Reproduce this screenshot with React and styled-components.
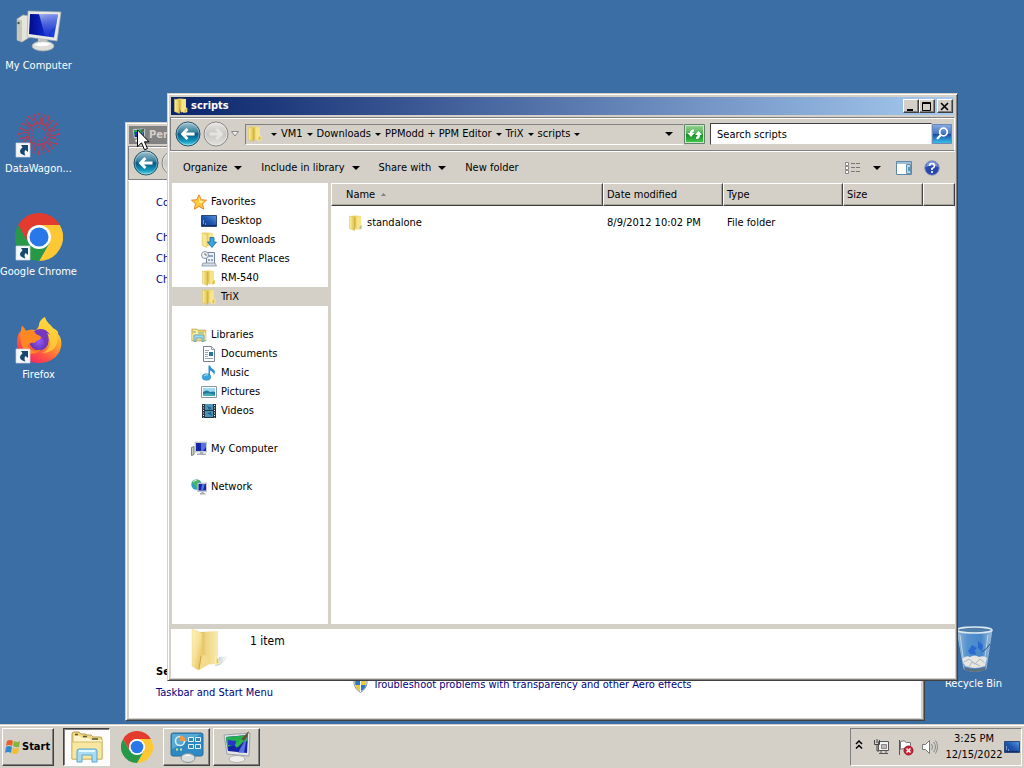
import React from 'react';
import styled, { createGlobalStyle, css } from 'styled-components';

const GlobalStyle = createGlobalStyle`
  * {
    box-sizing: border-box;
  }
  body {
    margin: 0;
    background: #3a6ea5;
    color: #000;
    font-family: "DejaVu Sans Condensed", "Noto Sans", sans-serif;
    font-size: 11px;
    line-height: 14px;
    cursor: default;
  }
  button, input {
    font: inherit;
    color: inherit;
  }
  a {
    color: inherit;
    text-decoration: none;
  }
  svg {
    display: block;
    flex: none;
  }
`

const raised = css`
  border: 1px solid;
  border-color: #fff #404040 #404040 #fff;
  box-shadow: inset -1px -1px 0 #808080;
`

const Screen = styled.div`
  display: flex;
  flex-direction: column;
  height: 100vh;
  overflow: hidden;
`

const Desktop = styled.main`
  position: relative;
  flex: 1;
  min-height: 0;
  display: flex;
  justify-content: space-between;
  padding: 7px 12px 33px 0;
`

const IconColumn = styled.div`
  display: flex;
  flex-direction: column;
  gap: 37px;
  justify-content: ${props => props.end ? 'flex-end' : 'flex-start'};
`

const Shortcut = styled.a`
  display: flex;
  flex-direction: column;
  align-items: center;
  gap: 4px;
  width: 77px;
  color: #fff;
  white-space: nowrap;
`

/* windows */

const Win = styled.section`
  position: absolute;
  display: flex;
  flex-direction: column;
  padding: 2px;
  background: #d4d0c8;
  border: 1px solid;
  border-color: #d4d0c8 #404040 #404040 #d4d0c8;
  box-shadow: inset 1px 1px 0 #fff, inset -1px -1px 0 #808080;
`

const BackWin = styled(Win)`
  left: 125px;
  top: 122px;
  right: 99px;
  bottom: 3px;
`

const FrontWin = styled(Win)`
  left: 167px;
  top: 93px;
  right: 66px;
  bottom: 43px;
`

const TitleBar = styled.header`
  display: flex;
  align-items: center;
  gap: 2px;
  flex: none;
  height: 18px;
  margin: 1px 1px 2px;
  padding: 0 1px 0 2px;
  color: ${props => props.active ? '#fff' : '#d4d0c8'};
  background: ${props => props.active
    ? 'linear-gradient(90deg, #0a246a, #a6caf0)'
    : 'linear-gradient(90deg, #808080, #c0c0c0)'};
`

const Title = styled.h1`
  flex: 1;
  margin: 0;
  font-size: 11px;
  font-weight: bold;
`

const CaptionButton = styled.button`
  ${raised}
  display: flex;
  align-items: center;
  justify-content: center;
  width: 16px;
  height: 14px;
  padding: 0;
  background: #d4d0c8;
`

const CaptionGroup = styled.div`
  display: flex;
`

const NavBar = styled.nav`
  display: flex;
  align-items: center;
  flex: none;
  height: 34px;
  padding: 0 2px 0 4px;
  border: 1px solid;
  border-color: #808080 #fff #808080 #808080;
  box-shadow: 0 1px 0 #fff, inset 0 1px 0 #fff;
`

const IconButton = styled.button`
  display: flex;
  align-items: center;
  justify-content: center;
  padding: 0;
  border: 0;
  background: none;
`

const Travel = styled.div`
  display: flex;
  align-items: center;
  gap: 2px;
  margin-right: 6px;
`

const AddressBar = styled.div`
  display: flex;
  align-items: center;
  flex: 1;
  height: 21px;
  padding: 0 10px 0 1px;
  border: 1px solid;
  border-color: #808080 #d4d0c8 #fff #808080;
`

const Crumbs = styled.div`
  display: flex;
  align-items: center;
  gap: 4px;
  flex: 1;
  padding-left: 8px;
`

const Crumb = styled.a`
  white-space: nowrap;
`

const SearchBox = styled.input`
  width: 222px;
  height: 22px;
  margin: 0 0 0 5px;
  padding: 0 6px;
  border: 1px solid;
  border-color: #404040 #d4d0c8 #d4d0c8 #404040;
  border-radius: 0;
  background: #fff;
  outline: none;
  &::placeholder {
    color: #000;
    opacity: 1;
  }
`

const CommandBar = styled.div`
  display: flex;
  align-items: center;
  flex: none;
  gap: 19px;
  height: 31px;
  margin-top: 1px;
  padding: 0 15px 0 13px;
`

const Command = styled.button`
  display: flex;
  align-items: center;
  gap: 7px;
  padding: 0;
  border: 0;
  background: none;
  white-space: nowrap;
`

const ViewTools = styled.div`
  display: flex;
  align-items: center;
  gap: 12px;
  margin-left: auto;
`

const MoreViews = styled(IconButton)`
  padding-right: 3px;
`

const Panes = styled.div`
  display: flex;
  flex: 1;
  min-height: 0;
  gap: 3px;
  padding-left: 2px;
`

const Tree = styled.aside`
  display: flex;
  flex-direction: column;
  gap: 19px;
  width: 156px;
  padding-top: 9px;
  background: #fff;
`

const TreeRow = styled.a`
  display: flex;
  align-items: center;
  gap: 4px;
  height: 19px;
  padding-left: ${props => props.child ? '29px' : '19px'};
  background: ${props => props.selected ? '#d4d0c8' : 'transparent'};
`

const ListPane = styled.div`
  flex: 1;
  background: #fff;
`

const FileTable = styled.table`
  width: 100%;
  table-layout: fixed;
  border-collapse: separate;
  border-spacing: 0;
`

const HeadCell = styled.th`
  width: ${props => props.w || 'auto'};
  height: 23px;
  padding: 0 3px;
  padding-left: ${props => props.first ? '14px' : '3px'};
  text-align: left;
  font-weight: normal;
  background: #d4d0c8;
  border: 1px solid;
  border-color: #fff #404040 #404040 #fff;
  box-shadow: inset -1px -1px 0 #aaa69e;
`

const Cell = styled.td`
  height: 19px;
  padding: 9px 4px 0;
  padding-left: ${props => props.first ? '17px' : '4px'};
`

const Inline = styled.span`
  display: flex;
  align-items: center;
  gap: ${props => props.gap || '3px'};
`

const Details = styled.footer`
  display: flex;
  align-items: flex-start;
  gap: 20px;
  flex: none;
  height: 49px;
  margin: 5px 0 0 1px;
  padding: 0 20px;
  background: #fff;
  font-size: 12px;
`

const DetailText = styled.span`
  padding-top: 5px;
`

const PanelBody = styled.div`
  display: flex;
  flex: 1;
  min-height: 0;
  gap: 73px;
  margin: 1px 1px 0;
  padding: 15px 27px 18px;
  background: #fff;
  color: #00007f;
`

const TaskPane = styled.div`
  display: flex;
  flex-direction: column;
  gap: 7px;
  width: 124px;
  white-space: nowrap;
`

const TaskHome = styled.a`
  margin-bottom: 14px;
`

const SeeAlso = styled.strong`
  margin-top: auto;
  color: #000;
`

const PanelFoot = styled.a`
  display: flex;
  align-items: center;
  align-self: flex-end;
  gap: 5px;
  height: 30px;
  white-space: nowrap;
`

const Cursor = styled.svg`
  position: absolute;
  left: 137px;
  top: 129px;
`

/* taskbar */

const Taskbar = styled.footer`
  display: flex;
  align-items: center;
  flex: none;
  height: 44px;
  padding: 1px 2px 0;
  gap: 3px;
  background: #d4d0c8;
  border-top: 1px solid #d4d0c8;
  box-shadow: inset 0 1px 0 #fff;
`

const StartButton = styled.button`
  ${raised}
  display: flex;
  align-items: center;
  gap: 1px;
  width: 52px;
  height: 38px;
  margin-right: 6px;
  padding: 0 0 0 1px;
  background: #d4d0c8;
  font-weight: bold;
`

const TaskButton = styled.button`
  display: flex;
  align-items: center;
  justify-content: center;
  width: 47px;
  height: 38px;
  padding: 0;
  background: #d4d0c8;
  border: 1px solid transparent;
  ${props => props.open && raised}
  ${props => props.pressed && css`
    background: #fdfcfb;
    border-color: #404040 #fff #fff #404040;
    box-shadow: inset 1px 1px 0 #808080;
  `}
`

const Tray = styled.div`
  display: flex;
  align-items: center;
  gap: 7px;
  height: 38px;
  margin-left: auto;
  padding: 0 1px 0 4px;
  border: 1px solid;
  border-color: #808080 #fff #fff #808080;
`

const MoreIcons = styled(IconButton)`
  justify-content: flex-start;
  width: 11px;
  padding-bottom: 4px;
`

const Clock = styled.time`
  width: 58px;
  text-align: center;
  line-height: 16px;
  white-space: nowrap;
`

const ShowDesktop = styled(IconButton)`
  margin-left: -6px;
`

/* icons */

const Down = ({ size = 5 }) => (
  <svg width={size === 5 ? 6 : 8} height={size === 5 ? 3 : 4} viewBox="0 0 8 4">
    <path d="M0 0h8L4 4z" fill="#000" />
  </svg>
)

const Folder = () => (
  <svg width="16" height="16" viewBox="0 0 16 16">
    <defs>
      <linearGradient id="fold" x1="0" x2="1">
        <stop offset="0" stopColor="#fbf0a4" />
        <stop offset="1" stopColor="#dfc04a" />
      </linearGradient>
    </defs>
    <path d="M3 1l4-.5L13 1v12.500l-5 1z" fill="#e9cf5c" />
    <path d="M8.500 1.500L13 1v12l-4.500 1z" fill="#f5e48a" />
    <path d="M1.500 1l5 1.500v13l-5-2z" fill="url(#fold)" stroke="#d9bc4d" strokeWidth=".5" />
    <path d="M6.800 2.500v12" stroke="#c7a437" strokeWidth=".8" />
    <path d="M11.500 10h2.500v4l-3.500.5z" fill="#e5c85a" stroke="#fff3b4" strokeWidth=".6" />
    <path d="M12.500 11.500v2" stroke="#7fb8da" strokeWidth=".8" />
  </svg>
)

const BigFolder = () => (
  <svg width="39" height="44" viewBox="0 0 39 44">
    <defs>
      <linearGradient id="bf1" x1="0" x2="1" y1="0" y2="1">
        <stop offset="0" stopColor="#fdf3b6" />
        <stop offset=".5" stopColor="#f6e196" />
        <stop offset="1" stopColor="#e0b64a" />
      </linearGradient>
      <linearGradient id="bf2" x1="0" x2="1">
        <stop offset="0" stopColor="#d9b651" />
        <stop offset=".35" stopColor="#f0d684" />
        <stop offset="1" stopColor="#f9eaae" />
      </linearGradient>
      <linearGradient id="bf3" x1="0" x2="1">
        <stop offset="0" stopColor="#7f99a6" stopOpacity=".7" />
        <stop offset="1" stopColor="#c9d5da" stopOpacity="0" />
      </linearGradient>
    </defs>
    <path d="M24 37l4-9 10-1-3 4-6 5z" fill="url(#bf3)" />
    <path d="M9 3l18-1v33l-18 1z" fill="url(#bf2)" />
    <path d="M25 26l4 8-5 2z" fill="#f4df96" stroke="#fff6d0" strokeWidth=".6" />
    <path d="M26.500 30v4" stroke="#9cc7dd" />
    <path d="M1 0l10 4v22l-2 14-2 1-6-4z" fill="url(#bf1)" stroke="#ecd488" strokeWidth=".5" />
    <path d="M11 26l-3 15 9-5-1-9z" fill="#f3dc8d" />
    <path d="M10 27L8 40" stroke="#c89f3b" strokeWidth=".8" />
  </svg>
)

const Monitor = ({ size = 48 }) => (
  <svg width={size} height={size} viewBox="0 0 48 48">
    <defs>
      <linearGradient id="mon" x1="0" x2="1">
        <stop offset="0" stopColor="#030c86" />
        <stop offset=".45" stopColor="#0b22c4" />
        <stop offset="1" stopColor="#2a4fe0" />
      </linearGradient>
      <linearGradient id="shine" x1="0" x2=".3" y1="0" y2="1">
        <stop offset="0" stopColor="#dbe4fb" />
        <stop offset="1" stopColor="#3a58dc" stopOpacity=".3" />
      </linearGradient>
    </defs>
    <path d="M2 12l6-4 7 1v21l-8 5-5-2z" fill="#e6e5dc" stroke="#a5aaa7" strokeWidth=".7" />
    <path d="M2 12l5 1v22l-5-2z" fill="#c6c8be" />
    <circle cx="3.500" cy="16" r="1.200" fill="#3f5943" />
    <path d="M23 31h9l1 6H23z" fill="#c9cccd" />
    <ellipse cx="28" cy="39" rx="11" ry="5" fill="#dedfda" stroke="#a7aba8" strokeWidth=".7" />
    <path d="M19 38q8-5 17-1-6 4-17 1z" fill="#fff" />
    <path d="M13 4l33 1-4 29-30-4z" fill="#e9e9e5" stroke="#a3adb5" strokeWidth=".7" />
    <path d="M15 7l28 .5-4 23-25-3.500z" fill="url(#mon)" />
    <path d="M24 7l19 .5-2 12q-7 3-8 10l-3-.4z" fill="url(#shine)" opacity=".75" />
  </svg>
)

const Arrow = ({ y = 28 }) => (
  <g transform={`translate(1 ${y})`}>
    <path d="M0 0h14v14H0z" fill="#f4f6f8" stroke="#cbd6e2" strokeWidth=".7" />
    <path d="M5 2h7v7L9.500 7C8 8.500 8.500 11 9.500 12.500 4 11.500 2 8 6.500 4.500z" fill="#16486f" />
  </g>
)

const DataWagon = () => (
  <svg width="48" height="48" viewBox="0 0 48 48">
    <g stroke="#a8405f" fill="none">
      {[0, 30, 60, 90, 120, 150, 180, 210, 240, 270, 300, 330].map(a => (
        <g key={a} transform={`rotate(${a} 24 24)`}>
          <path d="M24 14q3-4 0-9M27 13l2-6M22 13l-3-5" strokeWidth="1.200" />
          <circle cx="24" cy="4" r="1.200" fill="#c13c50" stroke="none" />
          <circle cx="29.500" cy="5.500" r="1" fill="#c13c50" stroke="none" />
        </g>
      ))}
      <circle cx="24" cy="24" r="10.500" strokeWidth="1.800" strokeDasharray="3 1" />
      <circle cx="24" cy="24" r="7" strokeWidth="1.500" strokeDasharray="2 1.500" />
    </g>
    <Arrow y={33} />
  </svg>
)

const Chrome = ({ size = 48, shortcut }) => (
  <svg width={size} height={size} viewBox="0 0 48 48">
    <path d="M24 12h20.800A24 24 0 0 1 24 48l10.400-18z" fill="#fcc934" />
    <path d="M3.200 12A24 24 0 0 0 24 48l10.400-18L24 24l-10.400 6z" fill="#279847" />
    <path d="M3.200 12A24 24 0 0 1 44.800 12H24a12 12 0 0 0-10.400 18z" fill="#e33b2e" />
    <circle cx="24" cy="24" r="12" fill="#fff" />
    <circle cx="24" cy="24" r="9.500" fill="#2878ea" />
    {shortcut && <Arrow y={33} />}
  </svg>
)

const Firefox = () => (
  <svg width="48" height="48" viewBox="0 0 48 48">
    <defs>
      <linearGradient id="fx1" x1=".8" x2=".2" y1="0" y2="1">
        <stop offset="0" stopColor="#fff44f" />
        <stop offset=".4" stopColor="#ffa52b" />
        <stop offset=".75" stopColor="#ff4b47" />
        <stop offset="1" stopColor="#ec2070" />
      </linearGradient>
      <radialGradient id="fx2">
        <stop offset="0" stopColor="#9059ff" />
        <stop offset="1" stopColor="#6334ae" />
      </radialGradient>
    </defs>
    <path d="M30 1c1 5 5 7 8 11 3 2 6 3 5 6 3 3 4 8 3 13-2 10-11 16-22 16C12 47 2 39 2 28c0-6 1-11 4-13l1-5c2 2 3 3 4 5 4-2 8-1 10-1l3-4c0-4 2-7 6-9z" fill="url(#fx1)" />
    <path d="M30 1c-1 9 14 12 12 25-1 7-7 11-15 11 6-2 9-7 8-13-2-6-8-7-11-11-1-5 1-9 6-12z" fill="#ffd43b" opacity=".75" />
    <circle cx="24" cy="25" r="9.500" fill="url(#fx2)" />
    <path d="M18 16c5-5 14-4 17 3l-3-2c4 7 0 14-5 16 5-7 1-14-9-17z" fill="#7338bd" />
    <path d="M7 10c2 2 3 3 4 5 5-2 8-1 10 3 2 2 5 1 5 4-2 3-5 2-6 5-4-1-6 0-7 3 2 5 7 6 13 3-5 7-15 6-18-1C5 26 5 18 7 10z" fill="#ff8822" />
    <Arrow y={33} />
  </svg>
)

const RecycleBin = () => (
  <svg width="48" height="48" viewBox="0 0 48 48">
    <defs>
      <linearGradient id="bin" x1="0" x2="1">
        <stop offset="0" stopColor="#aac9e4" stopOpacity=".8" />
        <stop offset=".3" stopColor="#5b9ad8" stopOpacity=".8" />
        <stop offset=".7" stopColor="#4a8dd2" stopOpacity=".8" />
        <stop offset="1" stopColor="#c7deef" stopOpacity=".7" />
      </linearGradient>
    </defs>
    <path d="M7 5h35l-6 39q-11 5-22 0z" fill="url(#bin)" stroke="#91b5d3" />
    <path d="M12 34q4-4 8-2 5-3 9 0 5-2 8 1l-2 8q-10 4-20 0z" fill="#e6e5df" />
    <path d="M14 37l5-3 6 5 5-5 5 4M19 42l3-5 8 4" stroke="#aeb9c0" fill="none" />
    <path d="M14 42q11 4 22 0l-1 3q-10 4-20 0z" fill="#5d6f7e" />
    <path d="M18 26l4-6 5 3-2 2 1 5-6-1zM28 16l5 4-1 6-4-3z" fill="#1c5fd2" opacity=".75" />
    <ellipse cx="24.500" cy="5" rx="17.500" ry="3" fill="#517fa9" stroke="#dce9f1" strokeWidth="1.600" />
    <path d="M10 10l4 29M38 10l-4 29" stroke="#e1eef6" opacity=".65" />
    <path d="M40 19q-3 5-8 8" stroke="#284f80" fill="none" />
  </svg>
)

const Round = ({ dir, dim }) => (
  <svg width="26" height="26" viewBox="0 0 26 26">
    <defs>
      <linearGradient id="blueRound" x1="0" x2="0" y1="0" y2="1">
        <stop offset="0" stopColor="#a9c6d1" />
        <stop offset=".42" stopColor="#357f9d" />
        <stop offset=".5" stopColor="#075782" />
        <stop offset=".8" stopColor="#1599bf" />
        <stop offset="1" stopColor="#65d8e5" />
      </linearGradient>
      <linearGradient id="grayRound" x1="0" x2="0" y1="0" y2="1">
        <stop offset="0" stopColor="#e8e7e4" />
        <stop offset=".5" stopColor="#c9c7c4" />
        <stop offset="1" stopColor="#e4e2de" />
      </linearGradient>
    </defs>
    <circle cx="13" cy="13" r="12" fill={dim ? 'url(#grayRound)' : 'url(#blueRound)'} stroke={dim ? '#858585' : '#244f65'} />
    <circle cx="13" cy="13" r="11" fill="none" stroke="#fff" opacity=".35" />
    <path
      d="M19.500 13H8M12.500 8L7.500 13l5 5"
      transform={dir === 'right' ? 'rotate(180 13 13)' : undefined}
      stroke={dim ? '#e6e4e2' : '#fff'}
      strokeWidth="2.800"
      fill="none"
    />
  </svg>
)

const Hollow = () => (
  <svg width="8" height="6" viewBox="0 0 8 6">
    <path d="M.5.5h7L4 5z" fill="#eee" stroke="#888" />
  </svg>
)

const Refresh = () => (
  <svg width="21" height="20" viewBox="0 0 21 20">
    <defs>
      <linearGradient id="green" x1="0" x2="0" y1="0" y2="1">
        <stop offset="0" stopColor="#8fd08c" />
        <stop offset=".48" stopColor="#4fb153" />
        <stop offset=".52" stopColor="#148a22" />
        <stop offset="1" stopColor="#3fc44a" />
      </linearGradient>
    </defs>
    <path d="M.5.5h20v19H.5z" fill="#cfe8cd" stroke="#64806a" />
    <path d="M2 2h17v16H2z" fill="url(#green)" />
    <path d="M10 5.500Q6 5 6 9H3.500L7 13l3.500-4H8.500Q8 7.500 10 7.500z" fill="#fff" />
    <path d="M12 15q4 .5 4-4h2L14.500 7 11 11h2.500q0 2-1.500 2z" fill="#fff" />
  </svg>
)

const SearchIcon = () => (
  <svg width="20" height="20" viewBox="0 0 20 20">
    <defs>
      <linearGradient id="srch" x1="0" x2="0" y1="0" y2="1">
        <stop offset="0" stopColor="#8babdf" />
        <stop offset=".48" stopColor="#4675c6" />
        <stop offset=".5" stopColor="#1746a7" />
        <stop offset="1" stopColor="#39c6ed" />
      </linearGradient>
    </defs>
    <path d="M.5.5h19v19H.5z" fill="url(#srch)" stroke="#6a8bb5" />
    <circle cx="11.500" cy="8" r="3.800" fill="none" stroke="#fff" strokeWidth="1.800" />
    <path d="M8.800 11L5 15" stroke="#fff" strokeWidth="2.200" />
  </svg>
)

const ViewIcon = () => (
  <svg width="16" height="12" viewBox="0 0 16 12">
    {[0, 4, 8].map(y => (
      <g key={y}>
        <path d={`M.5 ${y + .5}h3v3h-3z`} fill="#fff" stroke="#888" />
        <path d={`M6 ${y + 1.5}h4M11 ${y + 1.5}h4`} stroke="#777" />
      </g>
    ))}
  </svg>
)

const PaneIcon = () => (
  <svg width="16" height="14" viewBox="0 0 16 14">
    <path d="M.5.5h15v13H.5z" fill="#fff" stroke="#5e89a8" />
    <path d="M1 1h14v2H1z" fill="#9dbed5" />
    <path d="M10.500 3.500h4v9h-4z" fill="#b8dbeb" stroke="#6291b1" />
    <path d="M12 6h2v4h-2z" fill="#5997be" />
  </svg>
)

const HelpIcon = () => (
  <svg width="16" height="16" viewBox="0 0 16 16">
    <circle cx="8" cy="8" r="7.300" fill="#2748ae" stroke="#9aa0b8" />
    <path d="M2 7a6 6 0 0 1 12 0q-6-3-12 0z" fill="#7b93d4" />
    <path d="M5.500 6Q5.500 3.500 8 3.500T10.500 6Q10.500 7.500 8 8.500V10M8 11v2" fill="none" stroke="#fff" strokeWidth="1.700" />
  </svg>
)

const Star = () => (
  <svg width="16" height="16" viewBox="0 0 16 16">
    <path d="M8 .8l2.200 4.900 5.300.5-4 3.600 1.200 5.400L8 12.400l-4.700 2.800 1.200-5.400-4-3.600 5.300-.5z" fill="#ffc93c" stroke="#e8872e" />
    <path d="M8 3l1.300 3.700 3.500.3-3 2.300L8 8z" fill="#fff3a8" />
  </svg>
)

const DesktopIcon = () => (
  <svg width="16" height="12" viewBox="0 0 16 12">
    <defs>
      <linearGradient id="desk" x1="0" x2="1" y1="1" y2="0">
        <stop offset="0" stopColor="#123b86" />
        <stop offset=".5" stopColor="#1d56b0" />
        <stop offset="1" stopColor="#5a98df" />
      </linearGradient>
    </defs>
    <path d="M.5.5h15v11H.5z" fill="url(#desk)" stroke="#2c4a78" />
    <path d="M2 6h1M2 8h1M4 9h1" stroke="#cfe5ff" />
    <path d="M1 10.500h14" stroke="#13306a" />
  </svg>
)

const DownloadFolder = () => (
  <svg width="16" height="16" viewBox="0 0 16 16">
    <path d="M2 .5h4l6 .5v12l-6 1z" fill="#ecd168" />
    <path d="M7.500 1.500L12 1v8H7.500z" fill="#f6e792" />
    <path d="M1 1l5 1.500v13l-5-2z" fill="#f5e594" stroke="#d9bc4d" strokeWidth=".5" />
    <path d="M9 5.500h4v4.500h2.500L11 15.500 6.500 10H9z" fill="#3aa5e0" stroke="#17679f" strokeWidth=".8" />
  </svg>
)

const Recent = () => (
  <svg width="16" height="16" viewBox="0 0 16 16">
    <path d="M5.500 1.500h8v11h-8z" fill="#eef2f7" stroke="#76869a" />
    <path d="M7 4h5v2H7zM7 8h2v2H7zM10 8h2v2h-2z" fill="#8fa5bf" />
    <path d="M2 12h12l1.500 3H.8z" fill="#d4dce6" stroke="#74849a" strokeWidth=".7" />
    <circle cx="4" cy="4" r="3.500" fill="#f4f7fa" stroke="#8694a3" />
    <path d="M4 2v2h2" stroke="#555" fill="none" strokeWidth=".8" />
  </svg>
)

const Library = () => (
  <svg width="16" height="16" viewBox="0 0 16 16">
    <path d="M.8 2h5l1 1h8v11h-14z" fill="#e6cb68" stroke="#bd9f44" strokeWidth=".6" />
    <path d="M2 3h4l1 2h7v3H2z" fill="#fff2af" />
    <path d="M2 5h3M7 6h6" stroke="#5fab6c" />
    <path d="M1 7h14v6H1z" fill="#f5dd83" />
    <path d="M3 14.500V9q0-1 1-1h8q1 0 1 1v5.500h-2V11H5v3.500z" fill="#9bd7f0" stroke="#4c98be" strokeWidth=".7" />
  </svg>
)

const Doc = () => (
  <svg width="16" height="16" viewBox="0 0 16 16">
    <path d="M2.500.5h8l3 3v12h-11z" fill="#fff" stroke="#758294" />
    <path d="M10.500.5v3h3" fill="#dce3e9" stroke="#758294" strokeWidth=".7" />
    <path d="M4 4.500h4M4 6.500h3M4 8.500h3M4 10.500h3M4 12.500h8" stroke="#94a6bb" />
    <path d="M8 6h4v4H8z" fill="#26769b" />
  </svg>
)

const Music = () => (
  <svg width="16" height="16" viewBox="0 0 16 16">
    <path d="M7.500.5H9q1 3 3.500 4 2.500 2 .5 5.500-.5-3-4-4.500V12H7.500z" fill="#2b8fd2" />
    <ellipse cx="5.500" cy="12" rx="4.300" ry="3.200" fill="#39a4dc" stroke="#167ab4" strokeWidth=".5" />
    <path d="M3 11q2-2 4-1" stroke="#b5e4fb" fill="none" />
  </svg>
)

const Picture = () => (
  <svg width="16" height="14" viewBox="0 0 16 14">
    <path d="M.5 1.500h15v11H.5z" fill="#fff" stroke="#819aa9" />
    <path d="M2 3h12v8H2z" fill="#9fd8f1" />
    <path d="M2 7q4-3 7 0 3-1 5 0v4H2z" fill="#247a9b" />
    <path d="M2 9q6-2 12 1v1H2z" fill="#43adb9" />
  </svg>
)

const Video = () => (
  <svg width="16" height="16" viewBox="0 0 16 16">
    <path d="M1 1h14v14H1z" fill="#28343d" />
    <path d="M4 1h8v6H4zM4 8h8v6H4z" fill="#4c94ba" />
    <path d="M6 3l5 2-3 2zM6 10l4-1 1 4z" fill="#236184" />
    <path d="M2.500 2v13M13.500 2v13" stroke="#f0f3f5" strokeDasharray="1 1.500" />
  </svg>
)

const SmallPC = () => (
  <svg width="16" height="16" viewBox="0 0 16 16">
    <path d="M.5 6.500L3 5.500v8l-2.500 1z" fill="#c5cfc4" stroke="#71836f" />
    <path d="M4 1h12v10H4z" fill="#d4d7dc" stroke="#a5abb5" strokeWidth=".6" />
    <path d="M5 2h10v8H5z" fill="#1624a8" />
    <path d="M10 2h5v4l-3 4h-2z" fill="#5672dd" />
    <path d="M9 11h3v1.500h3V14H6v-1.500h3z" fill="#a7acb2" />
  </svg>
)

const NetworkIcon = () => (
  <svg width="16" height="16" viewBox="0 0 16 16">
    <circle cx="5.500" cy="5.500" r="5.200" fill="#2d9fc6" />
    <path d="M1 3q4-4 8-1L6 4l2 2-3 4-1-3z" fill="#4cb560" />
    <path d="M2 3q2-2 4-2" stroke="#d8f4e6" fill="none" />
    <path d="M6.500 4H16v8.500H6.500z" fill="#d4d7dc" stroke="#a5abb5" strokeWidth=".6" />
    <path d="M7.500 5H15v6.500H7.500z" fill="#1624a8" />
    <path d="M11 5h3l-2 6.500H10z" fill="#5672dd" />
    <path d="M10.500 13h2v1h2v1.500H9V14h1.500z" fill="#a7acb2" />
  </svg>
)

const Shield = () => (
  <svg width="15" height="16" viewBox="0 0 15 16">
    <path d="M7.500.5Q11 3 14 2.500 15 11 7.500 15.500 0 11 1 2.500 4 3 7.500.5z" fill="#f5f5f5" stroke="#879099" />
    <path d="M7 2v6H2.200V4Q5 4 7 2zM8 8h4.800Q12 12 8 14z" fill="#2e78bb" />
    <path d="M8 2q2 2 4.800 2v4H8zM7 8v6Q3 12 2.200 8z" fill="#e4cc3a" />
  </svg>
)

const Flag = () => (
  <svg width="17" height="18" viewBox="0 0 17 18">
    <path d="M3 3q3-2 6 0L8 8Q5 6 2 8z" fill="#e7602b" />
    <path d="M10 3q3 2 6 0l-1 6q-3 1-6-1z" fill="#84b63b" />
    <path d="M2 9q3-2 6 0l-1 6q-3-2-6 0z" fill="#3388cc" />
    <path d="M9 10q3 1 6 0l-1 5q-3 2-6 0z" fill="#f4bd2a" />
  </svg>
)

const Explorer = () => (
  <svg width="34" height="34" viewBox="0 0 34 34">
    <path d="M2 4q0-2 2-2h5l2 2h4l2 1h4l2 2h7q2 0 2 2v20H2z" fill="#efd982" stroke="#b99d4c" />
    <path d="M4 6h6l2 2h7l2 2h11v3H4z" fill="#fff6cd" />
    <path d="M5 4.500h3M13 6.500h4M22 9h6" stroke="#4d5744" strokeWidth="1.500" />
    <path d="M2 12h30v17H2z" fill="#f7e7a3" stroke="#d6bc69" />
    <path d="M7 32V21q0-2 2-2h16q2 0 2 2v11h-5v-7H12v7z" fill="#a9dcf1" stroke="#5aa5cc" />
    <path d="M9 21h16" stroke="#e4f8ff" strokeWidth="2" />
  </svg>
)

const ControlPanel = () => (
  <svg width="34" height="32" viewBox="0 0 34 32">
    <path d="M1 4q0-2 2-2h28q2 0 2 2v19q0 2-2 2H3q-2 0-2-2z" fill="#2f8ac3" stroke="#286e98" />
    <path d="M2 3h29L2 18z" fill="#6bb7dd" opacity=".7" />
    <circle cx="10" cy="10" r="4.500" fill="none" stroke="#d8eef8" strokeWidth="1.600" />
    <path d="M10 10V4.500a5.500 5.500 0 0 1 5.500 5.500z" fill="#f39a3f" />
    <path d="M18.500 6.500h5v4h-5zM25.500 6.500h5v4h-5zM18.500 13.500h5v4h-5zM25.500 13.500h5v4h-5z" fill="#3186b8" stroke="#e1f5ff" />
    <path d="M6 18.500h2M10 18.500h2" stroke="#d4eb8b" strokeWidth="2" />
    <ellipse cx="18" cy="27" rx="7" ry="4.500" fill="#d9dcdc" stroke="#88949a" />
    <path d="M14 25q4-3 7 0z" fill="#fff" />
  </svg>
)

const Personalize = ({ size = 34 }) => (
  <svg width={size} height={size} viewBox="0 0 34 34">
    <path d="M15 23h6v5h-6z" fill="#bdc0c1" />
    <ellipse cx="17" cy="29" rx="8" ry="3.500" fill="#f0efec" stroke="#b3b4b3" />
    <path d="M4 5l26-2-1 23-22-2z" fill="#e4e4e3" stroke="#9aa2a9" />
    <path d="M6 7l22-2-1 18-19-2z" fill="#1424a5" />
    <path d="M6 7l22-2v6l-8 1-3 6-3-3-7 2z" fill="#22ae51" />
    <path d="M8 10l8 1-1 5-7-1z" fill="#2634cd" />
    <path d="M27 6l-3 17h-6z" fill="#6d86ea" opacity=".8" />
    <path d="M18 13l8-9 3-3-2 6-7 8z" fill="#654d31" />
    <path d="M15 15l6-6 3 2-6 6z" fill="#2db94c" />
  </svg>
)

const TrayNet = () => (
  <svg width="17" height="16" viewBox="0 0 17 16">
    <path d="M5.500 2.500h10v9h-10z" fill="#f2f2f2" stroke="#555" />
    <path d="M8.500 5.500h5v4h-5z" fill="#bbb" stroke="#888" />
    <path d="M8 12v2M13 12v2M6 14.500h9" stroke="#555" />
    <path d="M1.500 1v4.500h5V1M4 0v4M4 6v6h2" fill="none" stroke="#444" />
  </svg>
)

const TrayFlag = () => (
  <svg width="17" height="17" viewBox="0 0 17 17">
    <path d="M2.500 1v15" stroke="#555" />
    <path d="M3.500 2.500q4-2 6 1h4v7h-5q-2-2-5 0z" fill="#fff" stroke="#777" />
    <circle cx="11.500" cy="11.500" r="4.500" fill="#cf2437" stroke="#94182a" />
    <path d="M9.500 9.500l4 4M13.500 9.500l-4 4" stroke="#fff" strokeWidth="1.500" />
  </svg>
)

const TraySound = () => (
  <svg width="17" height="16" viewBox="0 0 17 16">
    <path d="M1.500 5.500h3l4-4v13l-4-4h-3z" fill="#fff" stroke="#777" />
    <path d="M10.500 5q2 3 0 6M12.500 3q4 5 0 10M14.500 1.500q4 6 0 13" fill="none" stroke="#888" />
  </svg>
)

/* data */

const tree = [
  {
    name: 'Favorites', icon: <Star />, items: [
      ['Desktop', <DesktopIcon />],
      ['Downloads', <DownloadFolder />],
      ['Recent Places', <Recent />],
      ['RM-540', <Folder />],
      ['TriX', <Folder />],
    ],
  },
  {
    name: 'Libraries', icon: <Library />, items: [
      ['Documents', <Doc />],
      ['Music', <Music />],
      ['Pictures', <Picture />],
      ['Videos', <Video />],
    ],
  },
  { name: 'My Computer', icon: <SmallPC />, items: [] },
  { name: 'Network', icon: <NetworkIcon />, items: [] },
]

const crumbs = ['VM1', 'Downloads', 'PPModd + PPM Editor', 'TriX', 'scripts']

const PersonalizationWindow = () => (
  <BackWin>
    <TitleBar>
      <Personalize size={16} />
      <Title>Personalization</Title>
    </TitleBar>
    <NavBar>
      <Travel>
        <IconButton aria-label="Back"><Round /></IconButton>
        <IconButton aria-label="Forward"><Round dir="right" dim /></IconButton>
      </Travel>
    </NavBar>
    <PanelBody>
      <TaskPane>
        <TaskHome href="#">Control</TaskHome>
        <a href="#">Change</a>
        <a href="#">Change</a>
        <a href="#">Change</a>
        <SeeAlso>See also</SeeAlso>
        <a href="#">Taskbar and Start Menu</a>
      </TaskPane>
      <PanelFoot href="#">
        <Shield />
        Troubleshoot problems with transparency and other Aero effects
      </PanelFoot>
    </PanelBody>
  </BackWin>
)

const ExplorerWindow = () => (
  <FrontWin>
    <TitleBar active>
      <Folder />
      <Title>scripts</Title>
      <CaptionGroup>
        <CaptionButton aria-label="Minimize">
          <svg width="10" height="9" viewBox="0 0 10 9"><path d="M1 7h6v2H1z" /></svg>
        </CaptionButton>
        <CaptionButton aria-label="Maximize">
          <svg width="10" height="9" viewBox="0 0 10 9"><path d="M.5.5h8v8h-8zM.5 1.500h8" fill="none" stroke="#000" /></svg>
        </CaptionButton>
      </CaptionGroup>
      <CaptionButton aria-label="Close">
        <svg width="10" height="9" viewBox="0 0 10 9"><path d="M1 1l7 7M8 1L1 8" stroke="#000" strokeWidth="1.600" /></svg>
      </CaptionButton>
    </TitleBar>
    <NavBar>
      <Travel>
        <IconButton aria-label="Back"><Round /></IconButton>
        <IconButton aria-label="Forward"><Round dir="right" dim /></IconButton>
        <IconButton aria-label="Recent pages"><Hollow /></IconButton>
      </Travel>
      <AddressBar>
        <Folder />
        <Crumbs>
          <Down />
          {crumbs.map(name => (
            <React.Fragment key={name}>
              <Crumb href="#">{name}</Crumb>
              <Down />
            </React.Fragment>
          ))}
        </Crumbs>
        <IconButton aria-label="Previous locations"><Down size={8} /></IconButton>
      </AddressBar>
      <IconButton aria-label="Refresh"><Refresh /></IconButton>
      <SearchBox type="text" aria-label="Search scripts" placeholder="Search scripts" />
      <IconButton aria-label="Search"><SearchIcon /></IconButton>
    </NavBar>
    <CommandBar>
      <Command>Organize<Down size={8} /></Command>
      <Command>Include in library<Down size={8} /></Command>
      <Command>Share with<Down size={8} /></Command>
      <Command>New folder</Command>
      <ViewTools>
        <IconButton aria-label="Change view"><ViewIcon /></IconButton>
        <MoreViews aria-label="More views"><Down size={8} /></MoreViews>
        <IconButton aria-label="Preview pane"><PaneIcon /></IconButton>
        <IconButton aria-label="Help"><HelpIcon /></IconButton>
      </ViewTools>
    </CommandBar>
    <Panes>
      <Tree>
        {tree.map(group => (
          <div key={group.name}>
            <TreeRow href="#">{group.icon}{group.name}</TreeRow>
            {group.items.map(([name, icon]) => (
              <TreeRow href="#" key={name} child selected={name === 'TriX'}>{icon}{name}</TreeRow>
            ))}
          </div>
        ))}
      </Tree>
      <ListPane>
        <FileTable>
          <thead>
            <tr>
              <HeadCell first w="272px">
                <Inline gap="6px">
                  Name
                  <svg width="5" height="3" viewBox="0 0 5 3"><path d="M0 3h5L2.500 0z" fill="#808080" /></svg>
                </Inline>
              </HeadCell>
              <HeadCell w="120px">Date modified</HeadCell>
              <HeadCell w="120px">Type</HeadCell>
              <HeadCell w="80px">Size</HeadCell>
              <HeadCell />
            </tr>
          </thead>
          <tbody>
            <tr>
              <Cell first><Inline><Folder />standalone</Inline></Cell>
              <Cell>8/9/2012 10:02 PM</Cell>
              <Cell>File folder</Cell>
              <Cell />
              <Cell />
            </tr>
          </tbody>
        </FileTable>
      </ListPane>
    </Panes>
    <Details>
      <BigFolder />
      <DetailText>1 item</DetailText>
    </Details>
  </FrontWin>
)

const App = () => (
  <Screen>
    <GlobalStyle />
    <Desktop>
      <IconColumn>
        <Shortcut href="#"><Monitor />My Computer</Shortcut>
        <Shortcut href="#"><DataWagon />DataWagon...</Shortcut>
        <Shortcut href="#"><Chrome shortcut />Google Chrome</Shortcut>
        <Shortcut href="#"><Firefox />Firefox</Shortcut>
      </IconColumn>
      <IconColumn end>
        <Shortcut href="#"><RecycleBin />Recycle Bin</Shortcut>
      </IconColumn>
      <PersonalizationWindow />
      <ExplorerWindow />
      <Cursor width="13" height="22" viewBox="0 0 13 22">
        <path d="M.5.8v17l4-4 3 7 3-1.300-3-6.700H12z" fill="#fff" stroke="#000" />
      </Cursor>
    </Desktop>
    <Taskbar>
      <StartButton><Flag />Start</StartButton>
      <TaskButton open pressed aria-label="Windows Explorer"><Explorer /></TaskButton>
      <TaskButton aria-label="Google Chrome"><Chrome size={32} /></TaskButton>
      <TaskButton open aria-label="Control Panel"><ControlPanel /></TaskButton>
      <TaskButton open aria-label="Personalization"><Personalize /></TaskButton>
      <Tray>
        <MoreIcons aria-label="Show hidden icons">
          <svg width="8" height="10" viewBox="0 0 8 10">
            <path d="M1 4l3-3 3 3M1 8.500l3-3 3 3" fill="none" stroke="#000" strokeWidth="1.500" />
          </svg>
        </MoreIcons>
        <IconButton aria-label="Network"><TrayNet /></IconButton>
        <IconButton aria-label="Action Center"><TrayFlag /></IconButton>
        <IconButton aria-label="Volume"><TraySound /></IconButton>
        <Clock>3:25 PM<br />12/15/2022</Clock>
        <ShowDesktop aria-label="Show desktop"><DesktopIcon /></ShowDesktop>
      </Tray>
    </Taskbar>
  </Screen>
)

export default App;
